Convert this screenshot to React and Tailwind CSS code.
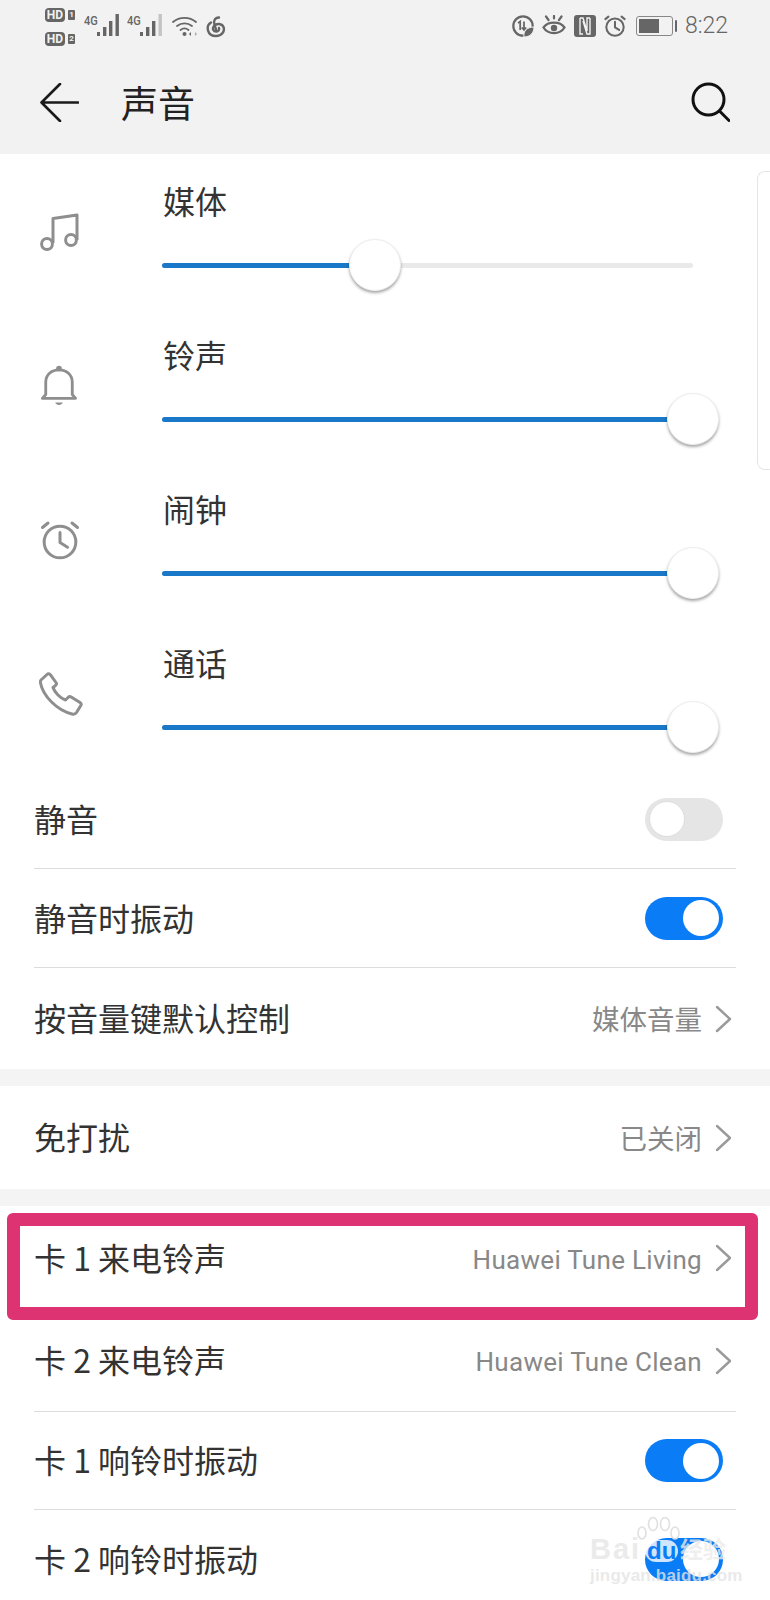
import React from "react";

const cjk = "font-['Noto_Sans_CJK_SC','Noto_Sans',sans-serif]";

const HdBadge = ({ n }) => (
  <div className="flex items-center gap-[3px]">
    <span className="flex h-[14px] w-[20px] items-center justify-center rounded-[4px] bg-[#666] font-['Roboto',sans-serif] text-[12px] leading-none font-bold text-[#f2f2f2]">
      HD
    </span>
    <span className="flex h-[10px] w-[7px] items-center justify-center rounded-[1px] bg-[#666] font-['Roboto',sans-serif] text-[8px] leading-none font-bold text-[#f2f2f2]">
      {n}
    </span>
  </div>
);

const Signal = ({ dim }) => (
  <div className="flex items-start">
    <span className="mt-[-1px] inline-block w-[13px] origin-top-left scale-x-[0.85] font-['Roboto',sans-serif] text-[13px] leading-[13px] font-medium text-[#666]">4G</span>
    <svg width="24" height="24" viewBox="0 0 24 24" className="mt-[-1px]" fill="#666">
      <rect x="0" y="18" width="3" height="4" />
      <rect x="6" y="13" width="3.4" height="9" />
      <rect x="12" y="7" width="3.4" height="15" />
      <rect x="18.5" y="0" width="3.4" height="22" fill={dim ? "#c4c4c4" : "#666"} />
    </svg>
  </div>
);

const Wifi = () => (
  <svg width="26" height="22" viewBox="0 0 26 22" fill="none" stroke="#666" strokeWidth="1.8" strokeLinecap="round">
    <path d="M1 7 C7.5 1.5 17.5 1.5 24 7" />
    <path d="M5 11 C9.5 7.5 15.5 7.5 20 11" />
    <path d="M8.5 15 C11 13 14 13 16.5 15" />
    <circle cx="12.5" cy="19" r="2" fill="#666" stroke="none" />
    <path d="M19 17 l-2 2 l2 2 z" fill="#666" stroke="none" />
    <path d="M23 17 l2 2 l-2 2 z" fill="#aaa" stroke="none" />
  </svg>
);

const Netease = () => (
  <svg width="20" height="22" viewBox="0 0 20 22" fill="none" stroke="#666" strokeWidth="2.4" strokeLinecap="round">
    <path d="M13 1.5 C8 2 7.5 5.5 8.5 9 L10.5 15" />
    <path d="M5 6.5 C-0.5 10 1 20 10 20 C16 20 19 15 17.5 11 C16 7.5 10.5 7 8 10 C6 12.5 7 15.5 10.5 15.5 C12.5 15.5 13.5 13.5 13 12" />
  </svg>
);

const DataSaver = () => (
  <svg width="22" height="22" viewBox="0 0 22 22">
    <circle cx="11" cy="11" r="9.7" fill="none" stroke="#666" strokeWidth="2.2" />
    <path d="M6 8 L8.2 6.5 V15 M12 6.5 V15 M9.8 12.5 L12 15 L14.2 12.5" fill="none" stroke="#666" strokeWidth="1.8" />
    <path d="M12 22 C11 16 15 12 22 12 C22 18 18 22 12 22 Z" fill="#666" stroke="#f2f2f2" strokeWidth="1" />
  </svg>
);

const Eye = () => (
  <svg width="24" height="22" viewBox="0 0 24 22" fill="none" stroke="#666" strokeWidth="2.2" strokeLinecap="round">
    <path d="M1.5 12.5 C6 6 18 6 22.5 12.5 C18 20 6 20 1.5 12.5 Z" />
    <circle cx="12" cy="13" r="3.2" fill="#666" stroke="none" />
    <path d="M4 1.5 L6.5 5 M19.5 1.5 L17 5 M12 1 L12 3.5" />
  </svg>
);

const Nfc = () => (
  <svg width="22" height="22" viewBox="0 0 22 22">
    <rect width="22" height="22" rx="3" fill="#666" />
    <path d="M6 3 H9 L13 16 V3 H16 M6 3 V19 H9 M16 3 V19 H13 L9 6" fill="none" stroke="#f2f2f2" strokeWidth="1.4" />
  </svg>
);

const AlarmIcon = ({ size, stroke, sw }) => (
  <svg width={size} height={size} viewBox="0 0 24 24" fill="none" stroke={stroke} strokeWidth={sw} strokeLinecap="round" strokeLinejoin="round">
    <circle cx="12" cy="13.2" r="9.5" />
    <path d="M12 7.5 V13.5 L16.5 16.3" />
    <path d="M1.5 4.5 L4.8 1.8 M22.5 4.5 L19.2 1.8" />
  </svg>
);

const Battery = () => (
  <div className="flex items-center gap-[2px]">
    <div className="h-[20px] w-[37px] rounded-[3px] border border-[#888] p-[2px]">
      <div className="h-full w-[20px] bg-[#666]" />
    </div>
    <div className="h-[12px] w-[2px] rounded-[1px] bg-[#666]" />
  </div>
);

const StatusBar = () => (
  <div className="flex h-[62px] items-start justify-between pr-[42px] pl-[45px]">
    <div className="flex items-start">
      <div className="mt-[8px] flex flex-col gap-[10px]">
        <HdBadge n="1" />
        <HdBadge n="2" />
      </div>
      <div className="mt-[15px] ml-[9px] flex gap-[6px]">
        <Signal />
        <Signal dim />
      </div>
      <div className="mt-[15px] ml-[8px]"><Wifi /></div>
      <div className="mt-[16px] ml-[8px]"><Netease /></div>
    </div>
    <div className="mt-[15px] flex items-center">
      <DataSaver />
      <div className="ml-[8px]"><Eye /></div>
      <div className="ml-[8px]"><Nfc /></div>
      <div className="ml-[8px]"><AlarmIcon size={22} stroke="#666" sw={2.2} /></div>
      <div className="ml-[10px]"><Battery /></div>
      <span className="ml-[8px] font-['Roboto',sans-serif] text-[23px] leading-[22px] font-light text-[#666]">8:22</span>
    </div>
  </div>
);

const Header = () => (
  <div className="h-[154px] bg-[#f2f2f2]">
    <StatusBar />
    <div className="flex h-[80px] items-center justify-between pr-[40px] pl-[40px]">
      <div className="flex items-center">
        <svg width="39" height="39" viewBox="0 0 39 39" fill="none" stroke="#1a1a1a" strokeWidth="2.6" strokeLinecap="round" strokeLinejoin="round">
          <path d="M38 19.5 H1.5 M20 1 L1.5 19.5 L20 38" />
        </svg>
        <span className={`${cjk} ml-[42px] text-[37px] leading-none font-normal text-[#222]`}>声音</span>
      </div>
      <svg width="39" height="40" viewBox="0 0 39 40" fill="none" stroke="#111" strokeWidth="3" strokeLinecap="round">
        <circle cx="17.5" cy="17.5" r="15.5" />
        <path d="M28.5 29 L38 38.5" />
      </svg>
    </div>
  </div>
);

const MusicIcon = () => (
  <svg width="40" height="40" viewBox="0 0 40 40" fill="none" stroke="#8e8e8e" strokeWidth="3" strokeLinejoin="round">
    <circle cx="7" cy="32" r="5.4" />
    <circle cx="31" cy="28" r="5.4" />
    <path d="M13 31 V6.5 L37 3 V28" />
  </svg>
);

const BellIcon = () => (
  <svg width="36" height="44" viewBox="0 0 38 44" className="ml-[1px]" fill="none" stroke="#8e8e8e" strokeWidth="3" strokeLinecap="round" strokeLinejoin="round">
    <path d="M1.5 35 H36.5 L33 31 V18 C33 10 27 5 19 5 C11 5 5 10 5 18 V31 Z" />
    <circle cx="19" cy="3.5" r="3" fill="#8e8e8e" stroke="none" />
    <path d="M15 39.5 H23 C22 43 16 43 15 39.5 Z" fill="#8e8e8e" stroke="none" />
  </svg>
);

const PhoneIcon = () => (
  <svg width="44" height="44" viewBox="0 0 44 44" className="ml-[-1px]" fill="none" stroke="#8e8e8e" strokeWidth="3" strokeLinejoin="round">
    <path d="M2 8 L8 2.5 C9 1.5 10.5 1.5 11.5 2.8 L17 10.5 C17.8 11.6 17.5 12.6 16.5 13.5 L14 15.5 C15.5 20 21 26 26.5 28 L29 25.5 C30 24.5 31 24.3 32.2 25 L41 30.5 C42.5 31.5 42.5 33 41.5 34 L37.5 40.5 C36.5 42 35 42.5 33 42 C18 38.5 4 24 1.5 11 C1.2 9.8 1.3 9 2 8 Z" />
  </svg>
);

const sliders = [
  { label: "媒体", icon: <MusicIcon />, pct: "w-[213px]", thumb: "left-[187px]" },
  { label: "铃声", icon: <BellIcon />, pct: "w-[531px]", thumb: "left-[505px]" },
  { label: "闹钟", icon: <AlarmIcon size={40} stroke="#8e8e8e" sw={1.8} />, pct: "w-[531px]", thumb: "left-[505px]" },
  { label: "通话", icon: <PhoneIcon />, pct: "w-[531px]", thumb: "left-[505px]" },
];

const SliderRow = ({ label, icon, pct, thumb }) => (
  <div className="flex h-[154px]">
    <div className="flex w-[162px] items-center pb-[4px] pl-[40px]">{icon}</div>
    <div className="w-[531px]">
      <div className={`${cjk} pt-[20px] pl-[1px] text-[32px] leading-[46px] font-normal text-[#333]`}>{label}</div>
      <div className="relative mt-[40px] h-[5px] rounded-full bg-[#e9e9e9]">
        <div className={`${pct} h-full rounded-full bg-[#1a78c8]`} />
        <div className={`${thumb} absolute top-[-24px] h-[52px] w-[52px] rounded-full border border-[#eee] bg-white shadow-[0_2px_3px_rgba(0,0,0,0.35)]`} />
      </div>
    </div>
  </div>
);

const Toggle = ({ on }) =>
  on ? (
    <div className="mr-[13px] flex h-[43px] w-[78px] items-center justify-end rounded-full bg-[#0a7cf5] pr-[4px]">
      <div className="h-[36px] w-[36px] rounded-full bg-white" />
    </div>
  ) : (
    <div className="mr-[13px] flex h-[43px] w-[78px] items-center rounded-full bg-[#e5e5e5] pl-[4px]">
      <div className="h-[36px] w-[36px] rounded-full border border-[#ddd] bg-white" />
    </div>
  );

const Chevron = () => (
  <svg width="17" height="28" viewBox="0 0 17 28" fill="none" stroke="#9a9a9a" strokeWidth="2.4" strokeLinecap="round" strokeLinejoin="round">
    <path d="M2 2 L15 14 L2 26" />
  </svg>
);

const Row = ({ title, value, latin, toggle, divider, h }) => (
  <div className={`${h} mx-[34px] flex items-center justify-between ${divider ? "border-b border-[#dcdcdc]" : ""}`}>
    <span className={`${cjk} mb-[3px] text-[32px] leading-none font-normal text-[#333]`}>{title}</span>
    {toggle !== undefined ? (
      <Toggle on={toggle} />
    ) : (
      <div className="flex items-center">
        <span className={`${latin ? "mt-[3px] font-['Roboto',sans-serif] text-[26px] tracking-[0.3px]" : `${cjk} text-[27.5px]`} leading-none font-normal text-[#888]`}>{value}</span>
        <div className="mr-[4px] ml-[13px] flex"><Chevron /></div>
      </div>
    )}
  </div>
);

const Watermark = () => (
  <div className="absolute top-[1516px] left-[590px] h-[68px] w-[140px]">
    <svg width="46" height="26" viewBox="0 0 46 26" className="absolute top-0 left-[46px]" fill="none" stroke="#e0e0e0" strokeWidth="1.6">
      <ellipse cx="6" cy="17" rx="4" ry="6" />
      <ellipse cx="17" cy="8" rx="4.5" ry="6.5" />
      <ellipse cx="29" cy="8" rx="4.5" ry="6.5" />
      <ellipse cx="39" cy="17" rx="4" ry="6" />
    </svg>
    <span className="absolute top-[19px] left-0 font-['Liberation_Sans',sans-serif] text-[29px] leading-none font-bold tracking-[2px] text-[#ebebeb]">Bai</span>
    <span className="absolute top-[24px] left-[55px] rounded-full bg-white/80 px-[2px] font-['Liberation_Sans',sans-serif] text-[24px] leading-[22px] font-bold text-[#0a7cf5]">du</span>
    <span className={`${cjk} absolute top-[21px] left-[90px] text-[23px] leading-none font-bold text-[#ebebeb]/80`}>经验</span>
    <span className="absolute top-[51px] left-0 font-['Liberation_Sans',sans-serif] text-[17px] leading-none font-bold tracking-[0.2px] text-[#e4e4e4]/80">jingyan.baidu.com</span>
  </div>
);

export default function App() {
  return (
    <div className="relative h-[1600px] w-[770px] overflow-hidden bg-white">
      <Header />
      <div className="absolute top-[171px] right-0 h-[299px] w-[13px] rounded-l-[8px] border-y border-l border-[#e6e6e6]" />
      <div className="pt-[3px]">
        {sliders.map((s) => (
          <SliderRow key={s.label} {...s} />
        ))}
      </div>
      <div className="mt-[-3px]">
        <Row h="h-[99px]" title="静音" toggle={false} divider />
        <Row h="h-[99px]" title="静音时振动" toggle divider />
        <Row h="h-[101px]" title="按音量键默认控制" value="媒体音量" />
      </div>
      <div className="h-[17px] bg-[#f4f4f4]" />
      <Row h="h-[103px]" title="免打扰" value="已关闭" />
      <div className="h-[17px] bg-[#f4f4f4]" />
      <Row h="h-[104px]" title="卡 1 来电铃声" value="Huawei Tune Living" latin />
      <Row h="h-[102px]" title="卡 2 来电铃声" value="Huawei Tune Clean" latin divider />
      <Row h="h-[98px]" title="卡 1 响铃时振动" toggle divider />
      <Row h="h-[98px]" title="卡 2 响铃时振动" toggle />
      <div className="absolute top-[1213px] left-[7px] h-[107px] w-[751px] rounded-[6px] border-[13px] border-[#dd3372]" />
      <Watermark />
    </div>
  );
}
